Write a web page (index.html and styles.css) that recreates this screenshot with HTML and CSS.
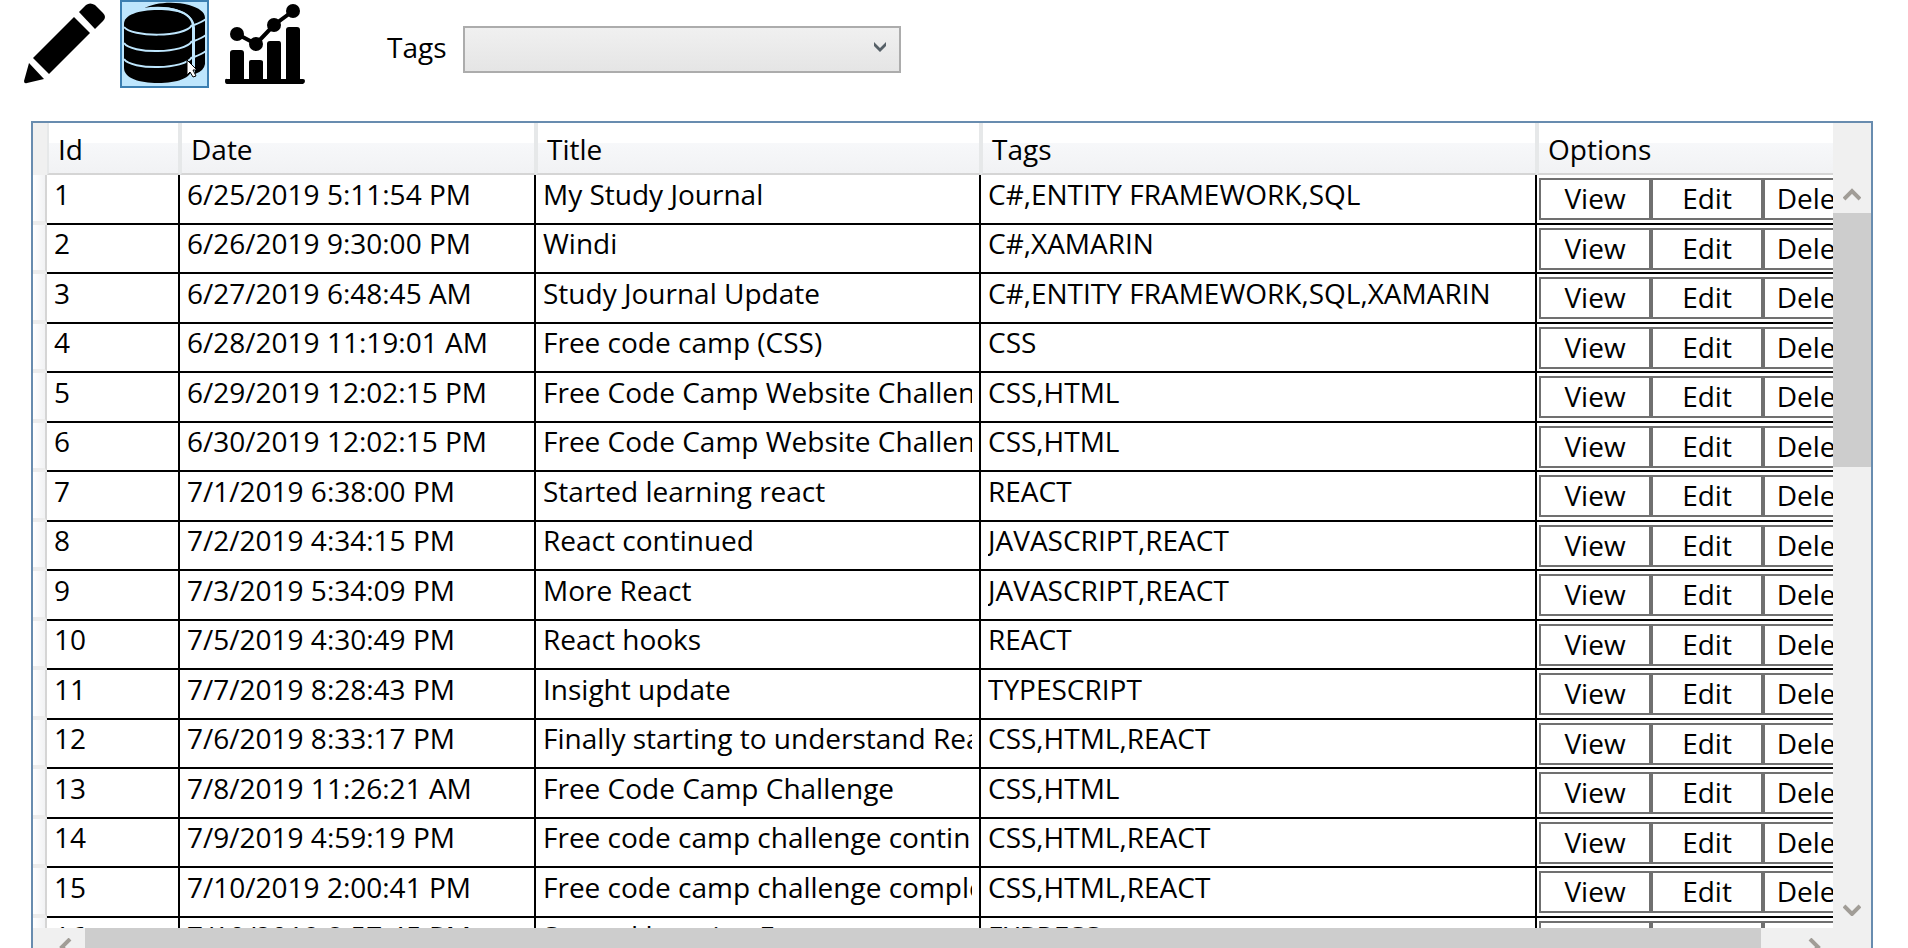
FILE: index.html
```html
<!DOCTYPE html>
<html lang="en">
<head>
<meta charset="utf-8">
<title>Study Journal</title>
<link rel="stylesheet" href="styles.css">
</head>
<body>
<main class="app">
  <header class="toolbar">
    <button class="tool" type="button" aria-label="Write entry">
      <svg viewBox="0 0 89 88"><path d="M59 12 66 5Q70 2 75 5L83 13Q87 17 83 21L75 29Z"/><path d="M54 17 70 33 29 74 13 58Z"/><path d="M9 63 24 79 7 83Q4 84 4 81Z"/></svg>
    </button>
    <button class="tool tool-active" type="button" aria-label="Browse entries" aria-pressed="true">
      <svg viewBox="0 0 89 88">
        <path d="M23 9C34 2 55 1 69 5 79 8 85 12 85 18V64Q84 71 75 74V28Q74 14 56 9 41 5 23 9Z"/>
        <path d="M4 24C4 15 18 10 38 10S72 15 72 24V68C72 78 57 83 38 83S4 78 4 68Z"/>
        <path class="cut" d="M4 27C11 37 65 38 72 25M4 43C11 54 65 54 72 41M4 59C11 70 65 70 72 57M23 9C50 5 73 12 73 27V80M74 25Q82 22 86 19M74 41Q82 38 86 35M74 57Q82 54 86 51"/>
      </svg>
      <svg class="pointer" viewBox="0 0 12 19"><path d="M1 1V16L4 13 7 18 10 17 7 11H11Z"/></svg>
    </button>
    <button class="tool" type="button" aria-label="Statistics">
      <svg viewBox="0 0 89 88"><path d="M10 79V53Q10 50 13 50H21Q24 50 24 53V79ZM29 79V62Q29 60 31 60H40Q43 60 43 62V79ZM47 79V44Q47 41 50 41H59Q61 41 61 44V79ZM66 79V30Q66 27 69 27H77Q80 27 80 30V79ZM7 79H83Q85 79 85 81T83 84H7Q5 84 5 81T7 79Z"/><circle cx="17" cy="34" r="7"/><circle cx="36" cy="44" r="7"/><circle cx="54" cy="25" r="7"/><circle cx="73" cy="11" r="7"/><path class="trend" d="M17 34 36 44 54 25 73 11"/></svg>
    </button>
    <div class="filter">
      <label for="tags">Tags</label>
      <span class="select-wrap">
        <select id="tags"><option></option><option>CSS</option><option>REACT</option></select>
        <svg class="select-arrow" viewBox="0 0 14 12"><path d="M1 1 7 7 13 1V5L7 11 1 5Z"/></svg>
      </span>
    </div>
  </header>

  <section class="datagrid">
    <div class="viewport">
      <table>
        <colgroup><col class="c-row"><col class="c-id"><col class="c-date"><col class="c-title"><col class="c-tags"><col></colgroup>
        <thead><tr><td></td><th>Id</th><th>Date</th><th>Title</th><th>Tags</th><th>Options</th></tr></thead>
        <tbody id="rows"></tbody>
      </table>
    </div>
    <div class="vscroll">
      <button type="button" aria-label="Scroll up"><svg viewBox="0 0 18 14"><path d="M1 12 9 4 17 12"/></svg></button>
      <div class="track"><div class="thumb"></div></div>
      <button type="button" aria-label="Scroll down"><svg viewBox="0 0 18 14"><path d="M1 4 9 12 17 4"/></svg></button>
    </div>
    <div class="hscroll">
      <button type="button" aria-label="Scroll left"><svg viewBox="0 0 14 18"><path d="M11 1 3 9 11 17"/></svg></button>
      <div class="track"><div class="thumb"></div></div>
      <button type="button" aria-label="Scroll right"><svg viewBox="0 0 14 18"><path d="M3 1 11 9 3 17"/></svg></button>
    </div>
    <div class="corner"></div>
  </section>
</main>
<script src="app.js"></script>
</body>
</html>
```
FILE: styles.css
```css
* { box-sizing: border-box; }
body { margin: 0; height: 100vh; overflow: hidden; background: #fff; color: #000; font: 28px/34px "Open Sans", "Noto Sans", sans-serif; }
button, select { font: inherit; color: inherit; }

/* The grid's lower scroll bar runs past the window edge. */
.app { display: flex; flex-direction: column; height: calc(100vh + 20px); }

.toolbar { display: flex; flex: none; height: 121px; padding-left: 20px; gap: 11px; align-items: flex-start; }
.tool { position: relative; width: 89px; height: 88px; padding: 0; border: 0; background: none; }
.tool svg { display: block; width: 89px; height: 88px; }
.tool-active { background: #bee6fd; box-shadow: inset 0 0 0 2px #3c7fb1; }
.cut { fill: none; stroke: #bee6fd; stroke-width: 2; }
.trend { fill: none; stroke: #000; stroke-width: 4; }
.tool .pointer { position: absolute; left: 66px; top: 59px; width: 12px; height: 19px; fill: #fff; stroke: #000; stroke-width: 1; }

.filter { display: flex; align-items: center; gap: 16px; height: 47px; margin: 26px 0 0 67px; }
.filter label { padding-bottom: 6px; }
.select-wrap { position: relative; display: block; }
.filter select { display: block; width: 438px; height: 47px; appearance: none; border: 2px solid #acacac; border-radius: 0; background: linear-gradient(#f0f0f0, #e5e5e5); }
.select-arrow { position: absolute; right: 14px; top: 15px; width: 14px; height: 12px; fill: #566067; pointer-events: none; }

.datagrid { display: grid; flex: 1; min-height: 0; grid-template: minmax(0, 1fr) 38px / minmax(0, 1fr) 38px; margin: 0 35px 0 31px; border: 2px solid #688caf; background: #f0f0f0; }
.viewport { overflow: hidden; background: #fff; }

table { width: 100%; border-collapse: separate; border-spacing: 0; table-layout: fixed; }
.c-row { width: 14px; }
.c-id { width: 133px; }
.c-date { width: 356px; }
.c-title { width: 445px; }
.c-tags { width: 556px; }

thead tr { height: 52px; }
thead td { padding: 0; background: #f0f0f0; }
thead th { padding: 2px 9px 0; text-align: left; font-weight: 400; border: 0 solid #e6e8e9; border-width: 0 2px; border-bottom: 2px solid #d5d5d5; background: linear-gradient(#fff 0 40%, #f7f8fa 40%, #f1f2f4); }
thead th:last-child { border-right: 0; }

tbody tr { height: 49px; }
tbody tr:nth-child(odd) { height: 50px; }
tbody td { padding: 0 7px 5px; border-right: 2px solid #000; border-bottom: 2px solid #000; }
tbody th { padding: 0; border-right: 2px solid #d5d5d5; border-bottom: 4px solid #ececec; background: linear-gradient(90deg, #fff, #f1f2f4); }
.text { padding-bottom: 6px; overflow: hidden; white-space: nowrap; }
tbody td.options { padding: 2px 0 2px 2px; border-right: 0; overflow: hidden; }
.actions { display: flex; }
.actions button { flex: none; width: 112px; height: 42px; padding: 0 0 2px; border: 2px solid #707070; background: #fff; }

.vscroll, .hscroll { display: flex; background: #f0f0f0; }
.vscroll { flex-direction: column; padding-top: 52px; }
.hscroll { padding-left: 14px; }
.vscroll button, .hscroll button { display: grid; place-items: center; flex: none; width: 38px; height: 38px; padding: 0; border: 0; background: none; }
.vscroll svg { width: 18px; height: 14px; }
.hscroll svg { width: 14px; height: 18px; }
.vscroll path, .hscroll path { fill: none; stroke: #a19d97; stroke-width: 4; }
.track { flex: 1; min-width: 0; min-height: 0; }
.thumb { background: #cdcdcd; }
.vscroll .thumb { height: calc(100% * 3 / 8); }
.hscroll .thumb { width: 98%; height: 100%; }
```
FILE: app.js
```js
const entries = [
  ["6/25/2019 5:11:54 PM", "My Study Journal", "C#,ENTITY FRAMEWORK,SQL"],
  ["6/26/2019 9:30:00 PM", "Windi", "C#,XAMARIN"],
  ["6/27/2019 6:48:45 AM", "Study Journal Update", "C#,ENTITY FRAMEWORK,SQL,XAMARIN"],
  ["6/28/2019 11:19:01 AM", "Free code camp (CSS)", "CSS"],
  ["6/29/2019 12:02:15 PM", "Free Code Camp Website Challenge", "CSS,HTML"],
  ["6/30/2019 12:02:15 PM", "Free Code Camp Website Challenge", "CSS,HTML"],
  ["7/1/2019 6:38:00 PM", "Started learning react", "REACT"],
  ["7/2/2019 4:34:15 PM", "React continued", "JAVASCRIPT,REACT"],
  ["7/3/2019 5:34:09 PM", "More React", "JAVASCRIPT,REACT"],
  ["7/5/2019 4:30:49 PM", "React hooks", "REACT"],
  ["7/7/2019 8:28:43 PM", "Insight update", "TYPESCRIPT"],
  ["7/6/2019 8:33:17 PM", "Finally starting to understand React", "CSS,HTML,REACT"],
  ["7/8/2019 11:26:21 AM", "Free Code Camp Challenge", "CSS,HTML"],
  ["7/9/2019 4:59:19 PM", "Free code camp challenge continued", "CSS,HTML,REACT"],
  ["7/10/2019 2:00:41 PM", "Free code camp challenge completed", "CSS,HTML,REACT"],
  ["7/10/2019 8:57:45 PM", "Started learning Express", "EXPRESS"]
];

document.getElementById("rows").innerHTML = entries.map((entry, i) =>
  `<tr><th></th>${[i + 1, ...entry].map(v => `<td><div class="text">${v}</div></td>`).join("")}` +
  `<td class="options"><div class="actions"><button type="button">View</button><button type="button">Edit</button><button type="button">Delete</button></div></td></tr>`
).join("");
```
